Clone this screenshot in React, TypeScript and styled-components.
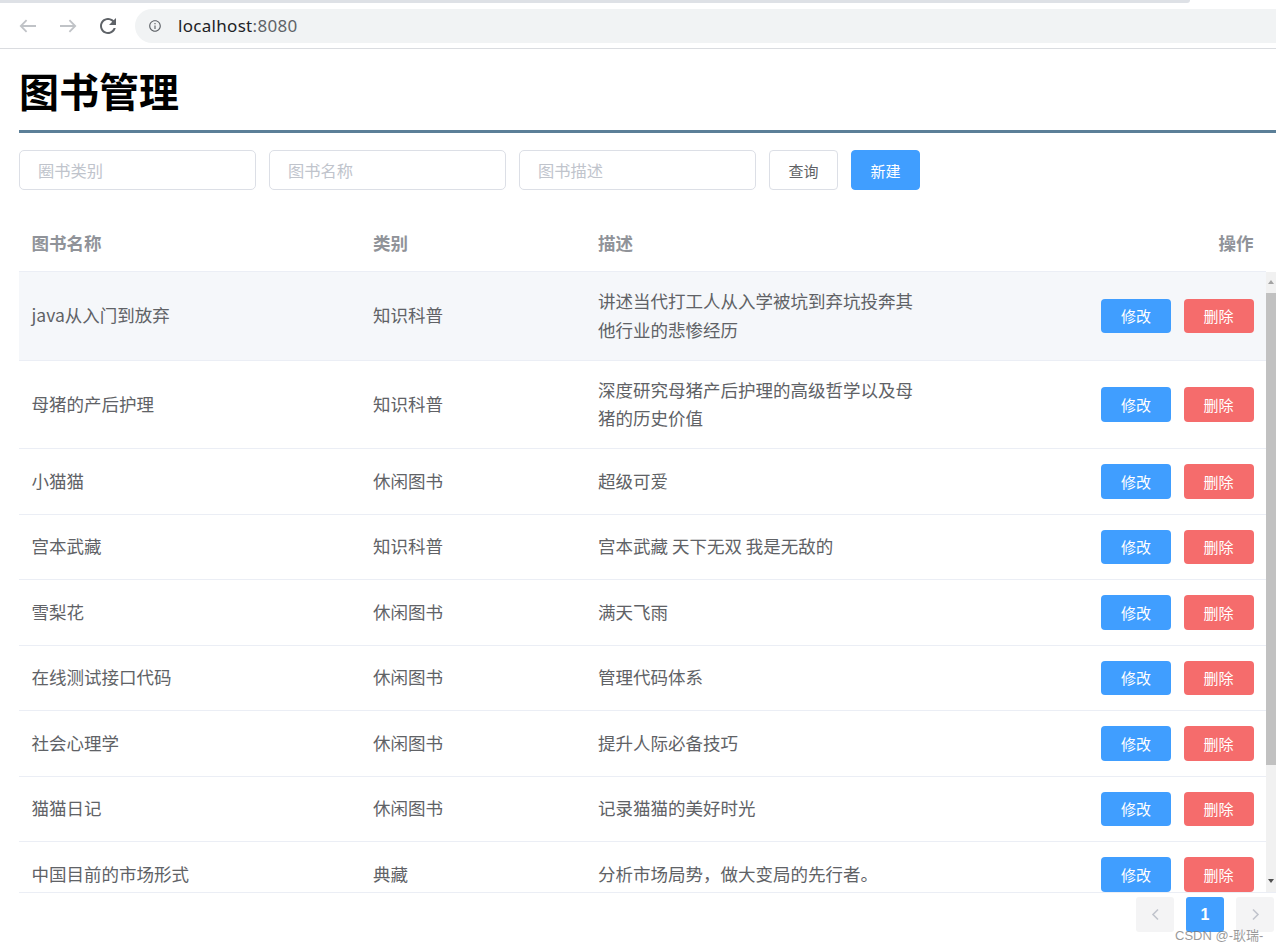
import React from "react";
import styled, { createGlobalStyle } from "styled-components";

const GlobalStyle = createGlobalStyle`
  html, body { margin: 0; padding: 0; background: #fff; }
  body {
    font-family: "Noto Sans CJK SC", "Noto Sans", sans-serif;
    overflow: hidden;
    position: relative;
    width: 1276px;
    height: 952px;
  }
  * { box-sizing: border-box; }
`;

/* ---------- browser chrome ---------- */
const Chrome = styled.header`
  background: #fff;
  border-bottom: 1px solid #dadce0;
`;
const TabEdge = styled.div`
  height: 3px;
  width: 1190px;
  background: #dee1e6;
  border-bottom-right-radius: 3px;
`;
const Toolbar = styled.div`
  height: 45px;
  display: flex;
  align-items: center;
  padding-left: 8px;
`;
const NavButton = styled.span<{ $muted?: boolean }>`
  width: 40px;
  height: 34px;
  display: flex;
  align-items: center;
  justify-content: center;
  color: ${(p) => (p.$muted ? "#c0c3c7" : "#5f6368")};
`;
const Omnibox = styled.div`
  flex: 1;
  margin-left: 7px;
  height: 34px;
  border-radius: 17px 0 0 17px;
  background: #f1f3f4;
  display: flex;
  align-items: center;
  padding-left: 13px;
  color: #5f6368;
`;
const Url = styled.span`
  margin-left: 16px;
  font-family: "Noto Sans", "Liberation Sans", sans-serif;
  font-size: 17px;
  letter-spacing: 0.3px;
`;
const Host = styled.span`
  color: #202124;
`;
const Port = styled.span`
  color: #5f6368;
`;

/* ---------- page ---------- */
const Page = styled.main`
  padding: 17px 0 0 19px;
`;
const Title = styled.h1`
  margin: 0;
  font-size: 40px;
  line-height: 48px;
  font-weight: 700;
  color: #000;
  padding-bottom: 16px;
  border-bottom: 3px solid #5b7f98;
`;
const SearchBar = styled.div`
  margin-top: 17px;
  display: flex;
  gap: 13px;
  align-items: center;
`;
const Field = styled.input`
  width: 237px;
  height: 40px;
  border: 1px solid #dcdfe6;
  border-radius: 5px;
  padding: 0 18px;
  font-family: inherit;
  font-size: 16.25px;
  color: #606266;
  outline: none;
  background: #fff;
  &::placeholder {
    color: #c0c4cc;
  }
`;
const Button = styled.button<{ $primary?: boolean }>`
  height: 40px;
  padding: 0 18.5px;
  border-radius: 4px;
  font-family: inherit;
  font-size: 15px;
  line-height: 1;
  cursor: pointer;
  border: 1px solid ${(p) => (p.$primary ? "#409eff" : "#dcdfe6")};
  background: ${(p) => (p.$primary ? "#409eff" : "#fff")};
  color: ${(p) => (p.$primary ? "#fff" : "#606266")};
`;

/* ---------- table ---------- */
const COLS = "341.5px 225px 345px 1fr";

const Table = styled.section`
  margin-top: 24px;
`;
const HeaderRow = styled.div`
  display: grid;
  grid-template-columns: ${COLS};
  margin-right: 10px;
  border-bottom: 1px solid #ebeef5;
`;
const HeadCell = styled.div<{ $right?: boolean }>`
  padding: 14px 12.5px;
  line-height: 29px;
  font-size: 17.5px;
  font-weight: 700;
  color: #909399;
  text-align: ${(p) => (p.$right ? "right" : "left")};
`;
const Body = styled.div`
  height: 621px;
  display: flex;
  border-bottom: 1px solid #ebeef5;
`;
const Viewport = styled.div`
  flex: 1;
  min-width: 0;
  overflow: hidden;
`;
const ScrollBar = styled.div`
  width: 10px;
  display: flex;
  flex-direction: column;
  background: #f1f1f1;
  padding-bottom: 2px;
`;
const ScrollButton = styled.div`
  height: 19px;
  display: flex;
  align-items: center;
  justify-content: center;
`;
const ArrowUp = styled.span`
  width: 0;
  height: 0;
  border-left: 3.5px solid transparent;
  border-right: 3.5px solid transparent;
  border-bottom: 4px solid #a3a3a3;
`;
const ArrowDown = styled.span`
  width: 0;
  height: 0;
  border-left: 3.5px solid transparent;
  border-right: 3.5px solid transparent;
  border-top: 4px solid #505050;
`;
const ScrollTrack = styled.div`
  flex: 1;
  padding-top: 2px;
`;
const Thumb = styled.div`
  height: 472px;
  background: #c1c1c1;
`;
const Row = styled.div<{ $hover?: boolean }>`
  display: grid;
  grid-template-columns: ${COLS};
  align-items: center;
  border-bottom: 1px solid #ebeef5;
  background: ${(p) => (p.$hover ? "#f5f7fa" : "#fff")};
`;
const Cell = styled.div`
  padding: 15px 12.5px;
  line-height: 28.75px;
  font-size: 17.5px;
  color: #606266;
`;
const Actions = styled.div`
  padding: 15px 12.5px;
  display: flex;
  justify-content: flex-end;
  gap: 12.5px;
`;
const ActionButton = styled.button<{ $danger?: boolean }>`
  width: 70px;
  height: 34.5px;
  border: none;
  border-radius: 4px;
  font-family: inherit;
  font-size: 15px;
  line-height: 1;
  color: #fff;
  cursor: pointer;
  background: ${(p) => (p.$danger ? "#f56c6c" : "#409eff")};
`;

/* ---------- pagination ---------- */
const Pager = styled.nav`
  margin-top: 4px;
  padding-right: 2px;
  display: flex;
  justify-content: flex-end;
  gap: 12px;
`;
const PageButton = styled.span<{ $active?: boolean }>`
  width: 38px;
  height: 35px;
  border-radius: 3px;
  display: flex;
  align-items: center;
  justify-content: center;
  font-family: "Liberation Sans", sans-serif;
  font-weight: 700;
  font-size: 16px;
  background: ${(p) => (p.$active ? "#409eff" : "#f4f4f5")};
  color: ${(p) => (p.$active ? "#fff" : "#c0c4cc")};
`;

const Watermark = styled.div`
  position: absolute;
  left: 1175px;
  top: 929px;
  font-family: "Liberation Sans", "Noto Sans CJK SC", sans-serif;
  font-size: 13px;
  line-height: 13px;
  color: rgba(120, 120, 120, 0.75);
  white-space: nowrap;
`;

/* ---------- icons ---------- */
const ArrowIcon = ({ dir }: { dir: "left" | "right" }) => (
  <svg width="18" height="14" viewBox="0 0 18 14" fill="none" stroke="currentColor" strokeWidth="1.8"
    style={{ transform: dir === "right" ? "scaleX(-1)" : undefined }}>
    <path d="M17 7H1.8M7.6 1.2 1.8 7l5.8 5.8" />
  </svg>
);
const ReloadIcon = () => (
  <svg width="24" height="24" viewBox="0 0 24 24" fill="currentColor">
    <path d="M17.65 6.35C16.2 4.9 14.21 4 12 4c-4.42 0-7.99 3.58-7.99 8s3.57 8 7.99 8c3.73 0 6.84-2.55 7.73-6h-2.08c-.82 2.33-3.04 4-5.65 4-3.31 0-6-2.69-6-6s2.69-6 6-6c1.66 0 3.14.69 4.22 1.78L13 11h7V4l-2.35 2.35z" />
  </svg>
);
const InfoIcon = () => (
  <svg width="14" height="14" viewBox="0 0 24 24" fill="currentColor">
    <path d="M11 7h2v2h-2zm0 4h2v6h-2zm1-9C6.48 2 2 6.48 2 12s4.48 10 10 10 10-4.48 10-10S17.52 2 12 2zm0 18c-4.41 0-8-3.59-8-8s3.59-8 8-8 8 3.59 8 8-3.59 8-8 8z" />
  </svg>
);
const Chevron = ({ dir }: { dir: "left" | "right" }) => (
  <svg width="9" height="13" viewBox="0 0 9 13" fill="none" stroke="currentColor" strokeWidth="1.6">
    <path d={dir === "left" ? "M7 1.5 2 6.5l5 5" : "M2 1.5l5 5-5 5"} />
  </svg>
);

/* ---------- data ---------- */
type Book = { name: string; type: string; desc: string };
const books: Book[] = [
  { name: "java从入门到放弃", type: "知识科普", desc: "讲述当代打工人从入学被坑到弃坑投奔其他行业的悲惨经历" },
  { name: "母猪的产后护理", type: "知识科普", desc: "深度研究母猪产后护理的高级哲学以及母猪的历史价值" },
  { name: "小猫猫", type: "休闲图书", desc: "超级可爱" },
  { name: "宫本武藏", type: "知识科普", desc: "宫本武藏 天下无双 我是无敌的" },
  { name: "雪梨花", type: "休闲图书", desc: "满天飞雨" },
  { name: "在线测试接口代码", type: "休闲图书", desc: "管理代码体系" },
  { name: "社会心理学", type: "休闲图书", desc: "提升人际必备技巧" },
  { name: "猫猫日记", type: "休闲图书", desc: "记录猫猫的美好时光" },
  { name: "中国目前的市场形式", type: "典藏", desc: "分析市场局势，做大变局的先行者。" },
];

export default function App() {
  return (
    <>
      <GlobalStyle />
      <Chrome>
        <TabEdge />
        <Toolbar>
          <NavButton $muted><ArrowIcon dir="left" /></NavButton>
          <NavButton $muted><ArrowIcon dir="right" /></NavButton>
          <NavButton><ReloadIcon /></NavButton>
          <Omnibox>
            <InfoIcon />
            <Url>
              <Host>localhost</Host>
              <Port>:8080</Port>
            </Url>
          </Omnibox>
        </Toolbar>
      </Chrome>
      <Page>
        <Title>图书管理</Title>
        <SearchBar>
          <Field placeholder="圈书类别" />
          <Field placeholder="图书名称" />
          <Field placeholder="图书描述" />
          <Button>查询</Button>
          <Button $primary>新建</Button>
        </SearchBar>
        <Table>
          <HeaderRow>
            <HeadCell>图书名称</HeadCell>
            <HeadCell>类别</HeadCell>
            <HeadCell>描述</HeadCell>
            <HeadCell $right>操作</HeadCell>
          </HeaderRow>
          <Body>
            <Viewport>
              {books.map((b, i) => (
                <Row key={b.name} $hover={i === 0}>
                  <Cell>{b.name}</Cell>
                  <Cell>{b.type}</Cell>
                  <Cell>{b.desc}</Cell>
                  <Actions>
                    <ActionButton>修改</ActionButton>
                    <ActionButton $danger>删除</ActionButton>
                  </Actions>
                </Row>
              ))}
            </Viewport>
            <ScrollBar>
              <ScrollButton><ArrowUp /></ScrollButton>
              <ScrollTrack><Thumb /></ScrollTrack>
              <ScrollButton><ArrowDown /></ScrollButton>
            </ScrollBar>
          </Body>
        </Table>
        <Pager>
          <PageButton><Chevron dir="left" /></PageButton>
          <PageButton $active>1</PageButton>
          <PageButton><Chevron dir="right" /></PageButton>
        </Pager>
      </Page>
      <Watermark>CSDN @-耿瑞-</Watermark>
    </>
  );
}
